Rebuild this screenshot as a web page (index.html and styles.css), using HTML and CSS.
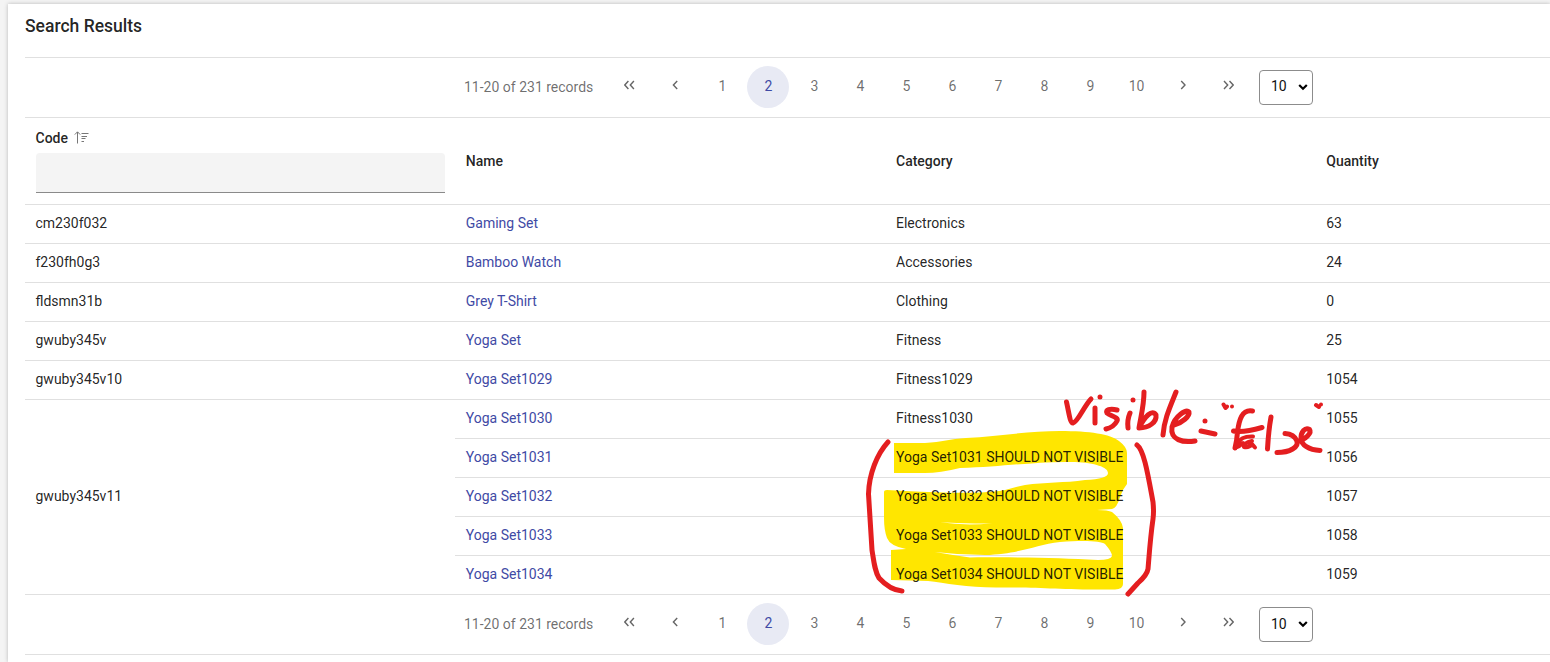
FILE: index.html
```html
<!DOCTYPE html>
<html lang="en">
<head>
<meta charset="utf-8">
<title>Search Results</title>
<link rel="stylesheet" href="styles.css">
</head>
<body>
<svg class="defs" width="0" height="0">
  <symbol id="first" viewBox="0 0 12 10"><path d="M4.4 1 .8 5l3.600 4M9.900 1 6.300 5l3.600 4"/></symbol>
  <symbol id="prev" viewBox="0 0 12 10"><path d="M7.200 1 3.400 5l3.800 4"/></symbol>
  <symbol id="next" viewBox="0 0 12 10"><path d="M5.200 1 9 5 5.200 9"/></symbol>
  <symbol id="last" viewBox="0 0 12 10"><path d="M2 1l3.700 4L2 9M7.500 1l3.700 4-3.700 4"/></symbol>
  <symbol id="caret" viewBox="0 0 10 8"><path d="M1.2 2 5 5.7 8.8 2"/></symbol>
</svg>
<main class="card">
  <h1 class="title">Search Results</h1>
  <div class="results">
    <nav class="pager pager-top">
      <span class="records">11-20 of 231 records</span>
      <span class="page"><svg class="arrow"><use href="#first"/></svg></span>
      <span class="page"><svg class="arrow"><use href="#prev"/></svg></span>
      <span class="page">1</span><span class="page active">2</span><span class="page">3</span><span class="page">4</span><span class="page">5</span><span class="page">6</span><span class="page">7</span><span class="page">8</span><span class="page">9</span><span class="page">10</span>
      <span class="page"><svg class="arrow"><use href="#next"/></svg></span>
      <span class="page"><svg class="arrow"><use href="#last"/></svg></span>
      <span class="size">10<svg class="caret"><use href="#caret"/></svg></span>
    </nav>
    <table class="grid">
      <thead>
        <tr>
          <th class="code-head">
            <div class="sort">Code
              <svg class="sort-icon" viewBox="0 0 15 13"><path d="M3.500 12.500V1M.8 3.600 3.500.8 6.200 3.600M7.500 2.500h7M7.500 5.500h5.500M7.500 7.500h4M7.500 10.500h2.500"/></svg>
            </div>
            <div class="filter"></div>
          </th>
          <th class="plain">Name</th><th class="plain">Category</th><th class="plain">Quantity</th>
        </tr>
      </thead>
      <tbody>
        <tr><td>cm230f032</td><td class="link">Gaming Set</td><td>Electronics</td><td>63</td></tr>
        <tr><td>f230fh0g3</td><td class="link">Bamboo Watch</td><td>Accessories</td><td>24</td></tr>
        <tr><td>fldsmn31b</td><td class="link">Grey T-Shirt</td><td>Clothing</td><td>0</td></tr>
        <tr><td>gwuby345v</td><td class="link">Yoga Set</td><td>Fitness</td><td>25</td></tr>
        <tr><td>gwuby345v10</td><td class="link">Yoga Set1029</td><td>Fitness1029</td><td>1054</td></tr>
        <tr><td rowspan="5">gwuby345v11</td><td class="link">Yoga Set1030</td><td>Fitness1030</td><td>1055</td></tr>
        <tr><td class="link">Yoga Set1031</td><td><span class="marked">Yoga Set1031 SHOULD NOT VISIBLE</span></td><td>1056</td></tr>
        <tr><td class="link">Yoga Set1032</td><td><span class="marked">Yoga Set1032 SHOULD NOT VISIBLE</span></td><td>1057</td></tr>
        <tr><td class="link">Yoga Set1033</td><td><span class="marked">Yoga Set1033 SHOULD NOT VISIBLE</span></td><td>1058</td></tr>
        <tr><td class="link">Yoga Set1034</td><td><span class="marked">Yoga Set1034 SHOULD NOT VISIBLE</span></td><td>1059</td></tr>
      </tbody>
    </table>
    <nav class="pager">
      <span class="records">11-20 of 231 records</span>
      <span class="page"><svg class="arrow"><use href="#first"/></svg></span>
      <span class="page"><svg class="arrow"><use href="#prev"/></svg></span>
      <span class="page">1</span><span class="page active">2</span><span class="page">3</span><span class="page">4</span><span class="page">5</span><span class="page">6</span><span class="page">7</span><span class="page">8</span><span class="page">9</span><span class="page">10</span>
      <span class="page"><svg class="arrow"><use href="#next"/></svg></span>
      <span class="page"><svg class="arrow"><use href="#last"/></svg></span>
      <span class="size">10<svg class="caret"><use href="#caret"/></svg></span>
    </nav>
  </div>
</main>
<svg class="marker" viewBox="0 0 1550 662">
  <path fill-rule="evenodd" d="M894 443H925C942 442 950 439 966 438C1000 436 1030 431 1060 431C1090 431 1110 434 1119 441Q1127 447 1127 453V484Q1122 490 1120 497Q1117 508 1112 509L1097 510Q1108 510 1112 512Q1122 520 1123 528V584Q1123 589 1115 589.500C1060 590 1040 587 1000 587.500C970 588 945 583 928 581L891 580V550L906 549Q890 546 887 538Q884 530 884 518V492Q884 490 887 490L905 491Q980 495 1005 490Q1015 487 1025 485C1045 482 1065 483 1085 480Q1108 479 1108 473C1108 467 1095 463 1075 462C1035 461 1005 467 960 468Q940 473 925 473H894Z
  M935 552Q960 555 985 555C1020 554 1035 545 1060 542C1085 540 1101 541 1105 544Q1112 552 1112 556Q1111 560 1098 560C1060 558 1030 557 970 557.500Q952 555 935 552Z M940 522.300Q965 524 992 523.200Q966 526 940 522.300Z"/>
</svg>
<svg class="pen" viewBox="0 0 1550 662">
  <path d="M888 442C877 454 869 474 868.500 494C870 520 871 535 872 550C874 563 875 572 879 578Q890 590 902 591"/>
  <path d="M1137 445C1144 450 1148 475 1153 502Q1154 512 1153 519C1150 540 1149 558 1148 569Q1147 575 1138 583L1128 594"/>
  <path d="M1066.500 402C1069 413 1070 423 1073 423C1078 422 1084 406 1091 399M1095 408V423M1100 397v.1M1117 410C1110 408 1105 410 1107 413C1110 416 1119 417 1117 421Q1114 427 1106 429M1130 413Q1127 420 1128 428M1133 400v.1M1144 392C1144 405 1141 416 1139 428C1145 416 1152 409 1156 415C1157 422 1149 428 1139 428M1176 392C1170 407 1164 420 1163 435M1174 425C1182 423 1190 416 1189 412C1186 409 1175 416 1172 427C1170 440 1183 443 1195 441M1205 421v.1M1201 431L1215 434"/>
  <path class="thin" d="M1223.500 404.500L1225.500 408L1227 406.500M1232 406.500v.1M1316 405L1319 407M1321 404.500v.1"/>
  <path d="M1252.500 411C1242 409 1239 420 1237.500 432Q1237 440 1235 448M1233.500 431Q1243 433 1262 427.500M1271 417C1269 428 1268 440 1267.500 449"/>
  <path class="thin" d="M1253 436.500Q1241 436 1238 443L1235 448Q1240 446 1243 443M1252 441Q1243 443 1244 447Q1249 448 1252 444L1255 447.500"/>
  <path d="M1285 433.500Q1294 434 1297 441C1299 447 1290 452.500 1277 452.500M1297 442C1306 439 1312 433 1309.500 429.500C1305 427 1301 432 1301 438C1301 445 1309 450 1320 450.500"/>
</svg>
</body>
</html>
```
FILE: styles.css
```css
* { box-sizing: border-box; }
body {
  position: relative;
  width: 1550px;
  height: 662px;
  margin: 0;
  padding: 4px 0 0 8px;
  overflow: hidden;
  background: #f4f4f4;
  color: rgba(0, 0, 0, .87);
  font: 14px/20px Roboto, "Liberation Sans", sans-serif;
}
.card {
  height: 658px;
  padding: 0 0 0 17px;
  background: #fff;
  box-shadow: 0 0 4px rgba(0, 0, 0, .25);
  overflow: hidden;
}
.title {
  height: 53px;
  margin: 0;
  padding-top: 10px;
  font-size: 17.500px;
  font-weight: 500;
  line-height: 24px;
}
.results { width: 1721px; }
.pager {
  display: flex;
  align-items: flex-start;
  height: 60px;
  padding: 8px 0 0 439px;
  border-bottom: 1px solid #e0e0e0;
  color: rgba(0, 0, 0, .58);
}
.pager-top { height: 61px; border-top: 1px solid #e0e0e0; }
.records { width: 145px; padding-top: 11px; white-space: nowrap; }
.page {
  display: flex;
  justify-content: center;
  width: 42px;
  height: 42px;
  margin-right: 4px;
  padding: 10px 0 0 1px;
  border-radius: 50%;
}
.active { background: #e8eaf4; color: #3f4aa5; }
.arrow { width: 12px; height: 10px; margin: 4px 2px 0 0; fill: none; stroke: #666; stroke-width: 1.400; }
.size {
  display: flex;
  width: 54px;
  height: 35px;
  margin: 4px 0 0 6px;
  padding: 6px 0 0 11px;
  border: 1px solid #8c8c8c;
  border-radius: 4px;
  color: #111;
}
.pager-top .size { padding-top: 5px; }
.caret { width: 10px; height: 8px; margin: 6px 0 0 11px; fill: none; stroke: #000; stroke-width: 2.200; }
.pager-top .caret { margin-top: 7px; }
.grid { width: 1721px; table-layout: fixed; border-spacing: 0; }
th, td { height: 39px; padding: 0 10.500px 2px; border-bottom: 1px solid #e0e0e0; text-align: left; vertical-align: middle; }
th { height: 87px; font-weight: 500; }
.plain { padding-bottom: 0; }
.sort { display: flex; align-items: center; gap: 6px; height: 20px; margin-bottom: 5px; }
.sort-icon { width: 15px; height: 13px; fill: none; stroke: #777; stroke-width: 1; }
.filter { height: 40px; border-bottom: 1px solid #8a8a8a; border-radius: 4px 4px 0 0; background: #f4f4f4; }
.link { color: #3f4aa5; }
.marked { position: relative; z-index: 2; }
.defs { position: absolute; }
.marker, .pen { position: absolute; left: 0; top: 0; width: 1550px; height: 662px; }
.marker { z-index: 1; fill: #ffe600; }
.pen { z-index: 3; fill: none; stroke: #e41e20; stroke-width: 5; stroke-linecap: round; stroke-linejoin: round; }
.pen .thin { stroke-width: 4; }
```
